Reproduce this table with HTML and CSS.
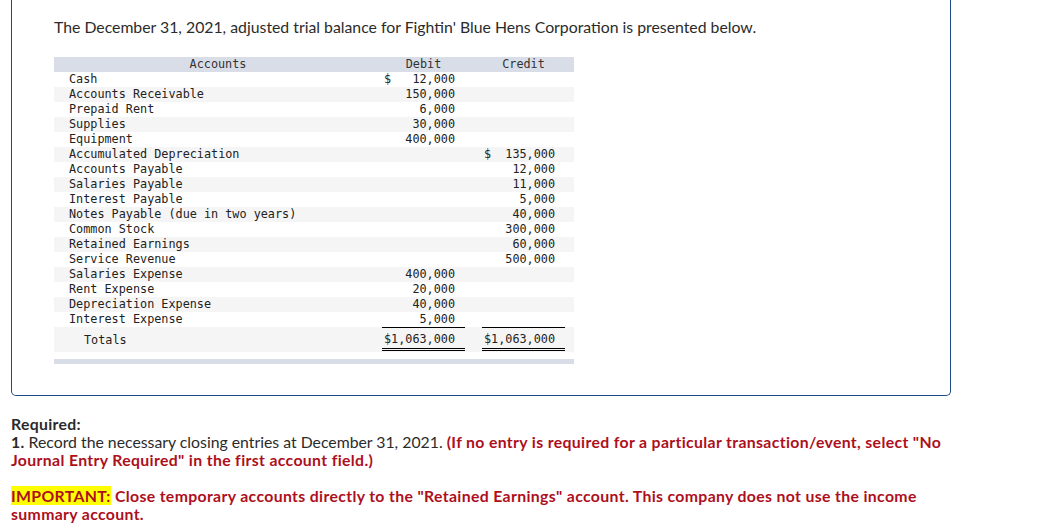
FILE: index.html
```html
<!DOCTYPE html>
<html lang="en">
<head>
<meta charset="utf-8">
<title>Trial balance</title>
<link rel="stylesheet" href="styles.css">
</head>
<body>
<div class="card">
  <p class="intro">The December 31, 2021, adjusted trial balance for Fightin' Blue Hens Corporation is presented below.</p>
  <div class="tb">
    <div class="row head"><div class="acc-h">Accounts</div><div class="num-h">Debit</div><div></div><div class="num-h">Credit</div><div></div></div>
    <div class="row"><div class="acc">Cash</div><div class="num"><span>$</span><span>12,000</span></div><div></div><div class="num"></div><div></div></div>
    <div class="row alt"><div class="acc">Accounts Receivable</div><div class="num"><span>150,000</span></div><div></div><div class="num"></div><div></div></div>
    <div class="row"><div class="acc">Prepaid Rent</div><div class="num"><span>6,000</span></div><div></div><div class="num"></div><div></div></div>
    <div class="row alt"><div class="acc">Supplies</div><div class="num"><span>30,000</span></div><div></div><div class="num"></div><div></div></div>
    <div class="row"><div class="acc">Equipment</div><div class="num"><span>400,000</span></div><div></div><div class="num"></div><div></div></div>
    <div class="row alt"><div class="acc">Accumulated Depreciation</div><div class="num"></div><div></div><div class="num"><span>$</span><span>135,000</span></div><div></div></div>
    <div class="row"><div class="acc">Accounts Payable</div><div class="num"></div><div></div><div class="num"><span>12,000</span></div><div></div></div>
    <div class="row alt"><div class="acc">Salaries Payable</div><div class="num"></div><div></div><div class="num"><span>11,000</span></div><div></div></div>
    <div class="row"><div class="acc">Interest Payable</div><div class="num"></div><div></div><div class="num"><span>5,000</span></div><div></div></div>
    <div class="row alt"><div class="acc">Notes Payable (due in two years)</div><div class="num"></div><div></div><div class="num"><span>40,000</span></div><div></div></div>
    <div class="row"><div class="acc">Common Stock</div><div class="num"></div><div></div><div class="num"><span>300,000</span></div><div></div></div>
    <div class="row alt"><div class="acc">Retained Earnings</div><div class="num"></div><div></div><div class="num"><span>60,000</span></div><div></div></div>
    <div class="row"><div class="acc">Service Revenue</div><div class="num"></div><div></div><div class="num"><span>500,000</span></div><div></div></div>
    <div class="row alt"><div class="acc">Salaries Expense</div><div class="num"><span>400,000</span></div><div></div><div class="num"></div><div></div></div>
    <div class="row"><div class="acc">Rent Expense</div><div class="num"><span>20,000</span></div><div></div><div class="num"></div><div></div></div>
    <div class="row alt"><div class="acc">Depreciation Expense</div><div class="num"><span>40,000</span></div><div></div><div class="num"></div><div></div></div>
    <div class="row last"><div class="acc">Interest Expense</div><div class="num"><span>5,000</span></div><div></div><div class="num"></div><div></div></div>
    <div class="row alt total"><div class="acc tot-label">Totals</div><div class="num sum"><span>$1,063,000</span></div><div></div><div class="num sum"><span>$1,063,000</span></div><div></div></div>
    <div class="foot"></div>
  </div>
</div>
<div class="req">
  <p class="req-title">Required:</p>
  <p><b>1.</b> Record the necessary closing entries at December 31, 2021. <span class="red">(If no entry is required for a particular transaction/event, select "No Journal Entry Required" in the first account field.)</span></p>
  <p class="important"><span class="hl">IMPORTANT:</span> Close temporary accounts directly to the "Retained Earnings" account. This company does not use the income summary account.</p>
</div>
</body>
</html>
```

FILE: styles.css
```css
html, body {
  margin: 0;
  padding: 0;
  background: #fff;
}
body {
  font-family: Lato, "Open Sans", Arial, sans-serif;
  color: #2b2b2b;
}
.card {
  margin-left: 11px;
  width: 940px;
  border: 1px solid #1d4a87;
  border-top: none;
  border-radius: 0 0 5px 5px;
  padding: 17px 0 31px 42px;
  box-sizing: border-box;
}
.intro {
  margin: 0 0 20px 0;
  font-size: 15.8px;
  line-height: 20px;
}
.tb {
  width: 520px;
  font-family: "DejaVu Sans Mono", "Liberation Mono", monospace;
  font-size: 11.8px;
  color: #222;
}
.row {
  display: grid;
  grid-template-columns: 328px 83px 17px 83px 9px;
  height: 15px;
  line-height: 15px;
}
.row.alt {
  background: #f5f5f5;
}
.row.head {
  background: #d9dde7;
  color: #333;
}
.acc-h, .num-h {
  text-align: center;
}
.acc {
  padding-left: 15px;
  white-space: pre;
}
.num {
  display: flex;
  justify-content: flex-end;
  padding: 0 10px 0 2px;
}
.num span:first-child:not(:last-child) {
  margin-right: auto;
}
.row.total {
  height: 25px;
  line-height: 22px;
}
.tot-label {
  padding-left: 30px;
  line-height: 26px;
}
.sum {
  border-top: 1px solid #000;
  border-bottom: 3px double #000;
  height: 20px;
  padding-left: 2px;
  justify-content: flex-start;
}
.foot {
  height: 5px;
  margin-top: 7px;
  background: #d9dde7;
}
.req {
  width: 936px;
  padding: 19px 0 0 11px;
  font-size: 15.8px;
  line-height: 18px;
}
.req p {
  margin: 0;
}
.req-title, .req b {
  font-weight: bold;
  letter-spacing: 0.3px;
}
.red, .important {
  color: #ad0f1c;
  font-weight: bold;
  letter-spacing: 0.35px;
}
.important {
  margin-top: 18px !important;
}
.hl {
  background: #ffff00;
}
```
